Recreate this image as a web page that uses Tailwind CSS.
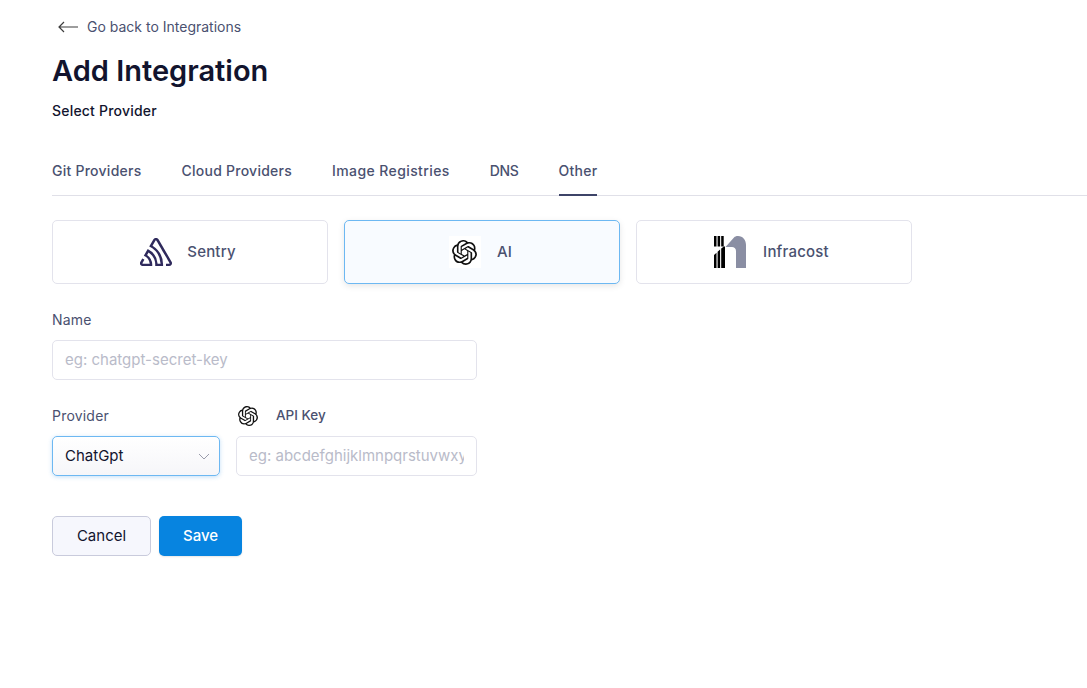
<!DOCTYPE html>
<html lang="en">
<head>
    <meta charset="UTF-8">
    <meta name="viewport" content="width=device-width, initial-scale=1.0">
    <title>Add Integration</title>
    <script src="https://cdn.jsdelivr.net/npm/@tailwindcss/browser@4"></script>
</head>
<body class="bg-white font-['Inter',sans-serif] overflow-hidden">
    <div class="pl-[52px] pt-[17px] h-[688px]">
        <!-- Back link -->
        <a class="flex items-center h-[20px] pl-[6px] gap-[9px] text-[14px] text-[#4a5170]">
            <svg class="w-[20px] h-[12px]" viewBox="0 0 20 12" fill="none" stroke="#3d3d3d" stroke-width="1.2"><path d="M20 6H1M6 1 1 6l5 5"/></svg>
            <span class="-mt-[2px]">Go back to Integrations</span>
        </a>
        <h1 class="mt-[16px] h-[36px] leading-[36px] text-[29px] font-semibold text-[#12142e]">Add Integration</h1>
        <p class="mt-[10px] h-[24px] leading-[24px] text-[14px] tracking-[0.2px] font-medium text-[#12142e]">Select Provider</p>

        <!-- Tabs -->
        <div class="mt-[25px] flex gap-[40px] h-[48px] border-b border-[#e0e0e8] text-[14px] tracking-[0.25px] font-medium text-[#4a5170]">
            <span class="pt-[12px]">Git Providers</span>
            <span class="pt-[12px]">Cloud Providers</span>
            <span class="pt-[12px] tracking-[0.4px]">Image Registries</span>
            <span class="pt-[12px] tracking-[-0.3px]">DNS</span>
            <span class="pt-[12px] h-[48px] border-b-2 border-[#3d4468]">Other</span>
        </div>

        <!-- Provider cards -->
        <div class="mt-[24px] flex gap-[16px] text-[15px] tracking-[0.2px] font-medium text-[#4a5170]">
            <div class="w-[276px] h-[64px] rounded-[5px] border border-[#e3e3ec] pr-[4px] flex items-center justify-center gap-[15px]">
                <svg class="w-[32px] h-[32px]" viewBox="0 0 24 24" fill="#2f2a5c"><path d="M13.91 2.505c-.873-1.448-2.972-1.448-3.844 0L6.904 7.92a15.478 15.478 0 0 1 8.53 12.811h-2.221A13.301 13.301 0 0 0 5.784 9.814l-2.926 5.06a7.65 7.65 0 0 1 4.435 5.848H2.194a.365.365 0 0 1-.298-.534l1.413-2.402a5.16 5.16 0 0 0-1.614-.913L.296 19.275a2.182 2.182 0 0 0 .812 2.999 2.24 2.24 0 0 0 1.086.288h6.983a9.322 9.322 0 0 0-3.845-8.318l1.11-1.922a11.47 11.47 0 0 1 4.95 10.24h5.915a17.242 17.242 0 0 0-7.885-15.28l2.244-3.845a.37.37 0 0 1 .504-.13c.255.14 9.75 16.708 9.928 16.9a.365.365 0 0 1-.327.543h-2.287c.029.612.029 1.223 0 1.831h2.297a2.206 2.206 0 0 0 1.922-3.31z"/></svg>
                <span>Sentry</span>
            </div>
            <div class="w-[276px] h-[64px] rounded-[5px] border border-[#6db8f2] bg-[#f8fbff] shadow-[0_2px_6px_rgba(0,0,0,0.1)] pr-[3px] flex items-center justify-center gap-[16px]">
                <span class="w-[32px] h-[32px] bg-white flex items-center justify-center">
                    <svg class="w-[25px] h-[25px]" viewBox="0 0 24 24" fill="#111"><path d="M22.2819 9.8211a5.9847 5.9847 0 0 0-.5157-4.9108 6.0462 6.0462 0 0 0-6.5098-2.9A6.0651 6.0651 0 0 0 4.9807 4.1818a5.9847 5.9847 0 0 0-3.9977 2.9 6.0462 6.0462 0 0 0 .7427 7.0966 5.98 5.98 0 0 0 .511 4.9107 6.051 6.051 0 0 0 6.5146 2.9001A5.9847 5.9847 0 0 0 13.2599 24a6.0557 6.0557 0 0 0 5.7718-4.2058 5.9894 5.9894 0 0 0 3.9977-2.9001 6.0557 6.0557 0 0 0-.7475-7.0729zm-9.022 12.6081a4.4755 4.4755 0 0 1-2.8764-1.0408l.1419-.0804 4.7783-2.7582a.7948.7948 0 0 0 .3927-.6813v-6.7369l2.02 1.1686a.071.071 0 0 1 .038.052v5.5826a4.504 4.504 0 0 1-4.4945 4.4944zm-9.6607-4.1254a4.4708 4.4708 0 0 1-.5346-3.0137l.142.0852 4.783 2.7582a.7712.7712 0 0 0 .7806 0l5.8428-3.3685v2.3324a.0804.0804 0 0 1-.0332.0615L9.74 19.9502a4.4992 4.4992 0 0 1-6.1408-1.6464zM2.3408 7.8956a4.485 4.485 0 0 1 2.3655-1.9728V11.6a.7664.7664 0 0 0 .3879.6765l5.8144 3.3543-2.0201 1.1685a.0757.0757 0 0 1-.071 0l-4.8303-2.7865A4.504 4.504 0 0 1 2.3408 7.872zm16.5963 3.8558L13.1038 8.364 15.1192 7.2a.0757.0757 0 0 1 .071 0l4.8303 2.7913a4.4944 4.4944 0 0 1-.6765 8.1042v-5.6772a.79.79 0 0 0-.407-.667zm2.0107-3.0231l-.142-.0852-4.7735-2.7818a.7759.7759 0 0 0-.7854 0L9.409 9.2297V6.8974a.0662.0662 0 0 1 .0284-.0615l4.8303-2.7866a4.4992 4.4992 0 0 1 6.6802 4.66zM8.3065 12.863l-2.02-1.1638a.0804.0804 0 0 1-.038-.0567V6.0742a4.4992 4.4992 0 0 1 7.3757-3.4537l-.142.0805L8.704 5.459a.7948.7948 0 0 0-.3927.6813zm1.0976-2.3654l2.602-1.4998 2.6069 1.4998v2.9994l-2.5974 1.4997-2.6067-1.4997Z"/></svg>
                </span>
                <span>AI</span>
            </div>
            <div class="w-[276px] h-[64px] rounded-[5px] border border-[#e3e3ec] pr-[5px] flex items-center justify-center gap-[17px]">
                <svg class="w-[32px] h-[32px]" viewBox="0 0 32 32">
                    <path d="M0 0h2.500v10.500H0zM3.600 0h2.500v10.500H3.600zM7.200 0h2.500v10.500H7.200zM0 19l2.500-2.200V32H0zM3.600 15.800l2.500-2.200V32H3.600zM7.200 12.600 9.900 10.500H11V32H7.200z" fill="#000"/>
                    <path d="M11.500 11 20 1.500C21 .5 22 0 24 0c5 0 8 4 8 9v23H22V15c0-2.500-2-4-4-4z" fill="#8a8ea3"/>
                </svg>
                <span>Infracost</span>
            </div>
        </div>

        <!-- Form -->
        <div class="w-[425px] mt-[24px]">
            <label class="block h-[24px] leading-[24px] text-[14px] tracking-[0.2px] text-[#4a5170]">Name</label>
            <div class="mt-[8px] h-[40px] rounded-[5px] border border-[#e3e3ec] px-[12px] flex items-center text-[15px] text-[#b9bbc9]">eg: chatgpt-secret-key</div>

            <div class="mt-[24px] flex gap-[16px]">
                <div class="w-[168px] shrink-0">
                    <label class="block h-[24px] leading-[24px] text-[14px] tracking-[0.2px] text-[#4a5170]">Provider</label>
                    <div class="mt-[8px] h-[40px] rounded-[5px] border border-[#6db8f2] bg-gradient-to-b from-white to-[#f6f6f9] shadow-[0_1px_4px_rgba(60,150,230,0.3)] pl-[12px] pr-[9px] flex items-center justify-between text-[15px] text-[#12142e]">
                        <span>ChatGpt</span>
                        <svg class="w-[12px] h-[7px]" viewBox="0 0 12 7" fill="none" stroke="#9a9cab" stroke-width="1"><path d="m1 1 5 5 5-5"/></svg>
                    </div>
                </div>
                <div class="flex-1 min-w-0">
                    <div class="h-[24px] flex items-center text-[13.5px] font-medium text-[#4a5170]">
                        <svg class="w-[20px] h-[20px] ml-[2px] mr-[18px]" viewBox="0 0 24 24" fill="#111"><path d="M22.2819 9.8211a5.9847 5.9847 0 0 0-.5157-4.9108 6.0462 6.0462 0 0 0-6.5098-2.9A6.0651 6.0651 0 0 0 4.9807 4.1818a5.9847 5.9847 0 0 0-3.9977 2.9 6.0462 6.0462 0 0 0 .7427 7.0966 5.98 5.98 0 0 0 .511 4.9107 6.051 6.051 0 0 0 6.5146 2.9001A5.9847 5.9847 0 0 0 13.2599 24a6.0557 6.0557 0 0 0 5.7718-4.2058 5.9894 5.9894 0 0 0 3.9977-2.9001 6.0557 6.0557 0 0 0-.7475-7.0729zm-9.022 12.6081a4.4755 4.4755 0 0 1-2.8764-1.0408l.1419-.0804 4.7783-2.7582a.7948.7948 0 0 0 .3927-.6813v-6.7369l2.02 1.1686a.071.071 0 0 1 .038.052v5.5826a4.504 4.504 0 0 1-4.4945 4.4944zm-9.6607-4.1254a4.4708 4.4708 0 0 1-.5346-3.0137l.142.0852 4.783 2.7582a.7712.7712 0 0 0 .7806 0l5.8428-3.3685v2.3324a.0804.0804 0 0 1-.0332.0615L9.74 19.9502a4.4992 4.4992 0 0 1-6.1408-1.6464zM2.3408 7.8956a4.485 4.485 0 0 1 2.3655-1.9728V11.6a.7664.7664 0 0 0 .3879.6765l5.8144 3.3543-2.0201 1.1685a.0757.0757 0 0 1-.071 0l-4.8303-2.7865A4.504 4.504 0 0 1 2.3408 7.872zm16.5963 3.8558L13.1038 8.364 15.1192 7.2a.0757.0757 0 0 1 .071 0l4.8303 2.7913a4.4944 4.4944 0 0 1-.6765 8.1042v-5.6772a.79.79 0 0 0-.407-.667zm2.0107-3.0231l-.142-.0852-4.7735-2.7818a.7759.7759 0 0 0-.7854 0L9.409 9.2297V6.8974a.0662.0662 0 0 1 .0284-.0615l4.8303-2.7866a4.4992 4.4992 0 0 1 6.6802 4.66zM8.3065 12.863l-2.02-1.1638a.0804.0804 0 0 1-.038-.0567V6.0742a4.4992 4.4992 0 0 1 7.3757-3.4537l-.142.0805L8.704 5.459a.7948.7948 0 0 0-.3927.6813zm1.0976-2.3654l2.602-1.4998 2.6069 1.4998v2.9994l-2.5974 1.4997-2.6067-1.4997Z"/></svg>
                        <span class="-mt-[2px]">API Key</span>
                    </div>
                    <div class="mt-[8px] h-[40px] rounded-[5px] border border-[#e3e3ec] px-[12px] flex items-center text-[15px] text-[#b9bbc9]">
                        <span class="block overflow-hidden whitespace-nowrap">eg: abcdefghijklmnpqrstuvwxyz</span>
                    </div>
                </div>
            </div>

            <!-- Actions -->
            <div class="mt-[40px] flex gap-[8px] text-[15px]">
                <button class="w-[99px] h-[40px] rounded-[5px] border border-[#c9cbdc] bg-[#f6f7fd] text-[#12142e]">Cancel</button>
                <button class="w-[83px] h-[40px] rounded-[5px] bg-[#0784e0] text-white font-medium shadow-[0_1px_2px_rgba(0,0,0,0.1)]">Save</button>
            </div>
        </div>
    </div>
</body>
</html>
